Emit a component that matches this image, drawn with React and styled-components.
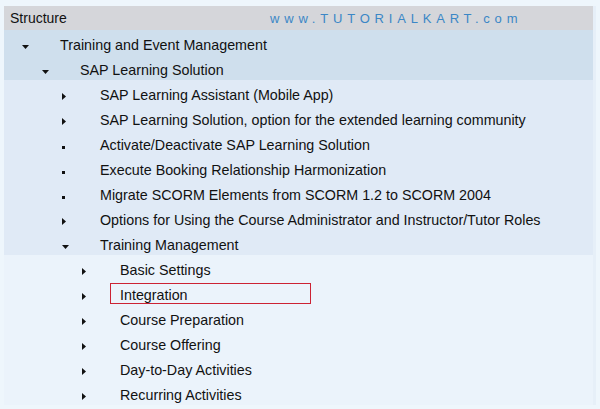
import React from 'react'
import styled, { createGlobalStyle } from 'styled-components';

const GlobalStyle = createGlobalStyle`
    html, body {
        margin: 0;
        padding: 0;
        background: #eef6fc;
        font-family: "Liberation Sans", Arial, sans-serif;
    }
`;

const items = [
    { level: 1, icon: 'down', text: 'Training and Event Management' },
    { level: 2, icon: 'down', text: 'SAP Learning Solution' },
    { level: 3, icon: 'right', text: 'SAP Learning Assistant (Mobile App)' },
    { level: 3, icon: 'right', text: 'SAP Learning Solution, option for the extended learning community' },
    { level: 3, icon: 'dot', text: 'Activate/Deactivate SAP Learning Solution' },
    { level: 3, icon: 'dot', text: 'Execute Booking Relationship Harmonization' },
    { level: 3, icon: 'dot', text: 'Migrate SCORM Elements from SCORM 1.2 to SCORM 2004' },
    { level: 3, icon: 'right', text: 'Options for Using the Course Administrator and Instructor/Tutor Roles' },
    { level: 3, icon: 'down', text: 'Training Management' },
    { level: 4, icon: 'right', text: 'Basic Settings' },
    { level: 4, icon: 'right', text: 'Integration', marked: true },
    { level: 4, icon: 'right', text: 'Course Preparation' },
    { level: 4, icon: 'right', text: 'Course Offering' },
    { level: 4, icon: 'right', text: 'Day-to-Day Activities' },
    { level: 4, icon: 'right', text: 'Recurring Activities' },
];

const tones = {
    1: '#cfdfed',
    2: '#cfdfed',
    3: '#e0eaf6',
    4: '#ebf3fb',
};

const NodeIcon = ({ kind }) => {
    if (kind === 'down') {
        return (
            <svg width="8" height="5" viewBox="0 0 8 5">
                <path d="M0 0 H7 L3.5 4 Z" fill="#111" />
            </svg>
        );
    }
    if (kind === 'right') {
        return (
            <svg width="5" height="8" viewBox="0 0 5 8">
                <path d="M0 0 V7 L4 3.5 Z" fill="#111" />
            </svg>
        );
    }
    return (
        <svg width="3" height="3" viewBox="0 0 3 3">
            <rect width="3" height="3" fill="#111" />
        </svg>
    );
};

const App = () => {
    return (
        <>
            <GlobalStyle />
            <Page>
                <Panel>
                    <Header>
                        <Title>Structure</Title>
                        <Watermark>www.TUTORIALKART.com</Watermark>
                    </Header>
                    {items.map((item, i) => (
                        <Row key={i} $bg={tones[item.level]}>
                            <IconSlot $level={item.level}>
                                <NodeIcon kind={item.icon} />
                            </IconSlot>
                            <Label $marked={item.marked}>{item.text}</Label>
                        </Row>
                    ))}
                </Panel>
            </Page>
        </>
    )
}

const Page = styled.div`
    width: 600px;
    height: 409px;
    box-sizing: border-box;
    padding: 6px 4px 4px 4px;
    background: #eef6fc;
    overflow: hidden;
`;

const Panel = styled.div`
    width: 592px;
    display: flex;
    flex-direction: column;
    border-right: 3px solid #e6eff8;
    box-sizing: border-box;
`;

const Header = styled.div`
    height: 24px;
    display: flex;
    align-items: center;
    background: #d5d6da;
    padding-left: 6px;
    font-size: 14px;
    color: #111;
`;

const Title = styled.span`
    width: 260px;
`;

const Watermark = styled.span`
    color: #3b87c6;
    font-size: 13px;
    letter-spacing: 4.8px;
`;

const Row = styled.div`
    height: 25px;
    box-sizing: border-box;
    padding-top: 4px;
    display: flex;
    align-items: center;
    background: ${p => p.$bg};
    font-size: 14.3px;
    color: #111;
`;

const IconSlot = styled.span`
    width: 38px;
    margin-left: ${p => 16 + (p.$level - 1) * 20}px;
    display: flex;
    align-items: center;
    padding-left: 2px;
    padding-top: 5px;
    box-sizing: border-box;
`;

const Label = styled.span`
    white-space: nowrap;
    padding-left: 2px;
    ${p => p.$marked && `
        margin-left: -8px;
        margin-top: -2px;
        width: 201px;
        height: 21px;
        box-sizing: border-box;
        padding-left: 9px;
        padding-top: 2px;
        border: 1px solid #cc2233;
        display: flex;
        align-items: center;
    `}
`;

export default App;
